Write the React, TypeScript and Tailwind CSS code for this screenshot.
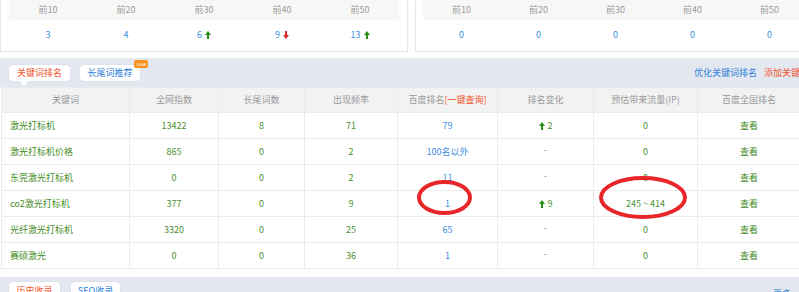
import React from "react";

const Up = () => (
  <svg width="6" height="8" viewBox="0 0 6 8" className="inline-block ml-[3px] align-[-1px]">
    <polygon points="0,4 3,0 6,4" fill="#2a8d17" />
    <rect x="2" y="4" width="2" height="4" fill="#2a8d17" />
  </svg>
);
const Down = () => (
  <svg width="6" height="8" viewBox="0 0 6 8" className="inline-block ml-[3px] align-[-1px]">
    <polygon points="0,4 3,8 6,4" fill="#d9262b" />
    <rect x="2" y="0" width="2" height="4" fill="#d9262b" />
  </svg>
);

const heads = ["前10", "前20", "前30", "前40", "前50"];

function Panel({ vals, px, w }: { vals: React.ReactNode[]; px: string; w: string }) {
  return (
    <div className={`${w} ${px} shrink-0 border border-t-0 border-[#e6e6e6] bg-white pb-[2px] shadow-[0_1px_1px_rgba(0,0,0,0.03)]`}>
      <div className="grid grid-cols-5 h-[20px] bg-[#f7f7f7] items-center text-[#9a9a9a]">
        {heads.map((h) => (
          <div key={h} className="text-center">{h}</div>
        ))}
      </div>
      <div className="grid grid-cols-5 h-[29px] items-center text-[#3c8fe0]">
        {vals.map((v, i) => (
          <div key={i} className="text-center">{v}</div>
        ))}
      </div>
    </div>
  );
}

type Row = { k: string; a: string; b: string; c: string; r: string; ch: string | null; up?: boolean; f: string };
const rows: Row[] = [
  { k: "激光打标机", a: "13422", b: "8", c: "71", r: "79", ch: "2", f: "0" },
  { k: "激光打标机价格", a: "865", b: "0", c: "2", r: "100名以外", ch: null, f: "0" },
  { k: "东莞激光打标机", a: "0", b: "0", c: "2", r: "11", ch: null, f: "0" },
  { k: "co2激光打标机", a: "377", b: "0", c: "9", r: "1", ch: "9", f: "245 ~ 414" },
  { k: "光纤激光打标机", a: "3320", b: "0", c: "25", r: "65", ch: null, f: "0" },
  { k: "赛硕激光", a: "0", b: "0", c: "36", r: "1", ch: null, f: "0" },
];

const widths = [128, 89, 86, 93, 100, 96, 104, 103];

export default function App() {
  const td = "border border-[#ebebeb] text-center";
  return (
    <div className="relative w-[799px] h-[292px] overflow-hidden bg-white text-[9px] leading-[12px] font-['Microsoft_YaHei','Noto_Sans_CJK_SC',sans-serif]">
      <div className="w-[824px]">
        {/* top panels */}
        <div className="flex gap-[7px]">
          <Panel
            w="w-[408px]"
            px="px-[8px]"
            vals={[
              "3",
              "4",
              <span>6<Up /></span>,
              <span>9<Down /></span>,
              <span>13<Up /></span>,
            ]}
          />
          <Panel w="w-[401px]" px="px-[7px]" vals={["0", "0", "0", "0", "0"]} />
        </div>

        {/* keyword band */}
        <div className="mt-[6px] h-[29px] bg-[#e3e7f0] flex items-center justify-between pl-[8px] pr-[15px]">
          <div className="flex gap-[8px] items-center">
            <div className="relative w-[63px] h-[18px] rounded-[5px] bg-white border border-[#dde1ea] flex items-center justify-center text-[#f2542d]">
              关键词排名
              <span className="absolute left-[11px] -bottom-[5px] w-0 h-0 border-l-[4px] border-r-[4px] border-t-[5px] border-l-transparent border-r-transparent border-t-white" />
            </div>
            <div className="relative w-[62px] h-[18px] rounded-[5px] bg-white border border-[#dde1ea] flex items-center justify-center text-[#2f7fd8]">
              长尾词推荐
              <span className="absolute -top-[5px] -right-[8px] h-[8px] px-[2px] rounded-[2px] bg-[#f7931e] text-white text-[5px] leading-[8px] italic">new</span>
            </div>
          </div>
          <div className="flex gap-[7px]">
            <span className="text-[#2f7fd8]">优化关键词排名</span>
            <span className="text-[#f2542d]">添加关键词</span>
          </div>
        </div>

        {/* table */}
        <table className="ml-[1px] table-fixed border-collapse" style={{ width: 799 }}>
          <colgroup>
            {widths.map((w, i) => (
              <col key={i} style={{ width: w }} />
            ))}
          </colgroup>
          <thead>
            <tr className="h-[25px] bg-[#f2f2f2] text-[#9a9a9a]">
              <th className={`${td} font-normal`}>关键词</th>
              <th className={`${td} font-normal`}>全网指数</th>
              <th className={`${td} font-normal`}>长尾词数</th>
              <th className={`${td} font-normal`}>出现频率</th>
              <th className={`${td} font-normal`}>
                百度排名<span className="text-[#f2542d]">[一键查询]</span>
              </th>
              <th className={`${td} font-normal`}>排名变化</th>
              <th className={`${td} font-normal`}>预估带来流量(IP)</th>
              <th className={`${td} font-normal`}>百度全国排名</th>
            </tr>
          </thead>
          <tbody className="text-[#4b9130]">
            {rows.map((r) => (
              <tr key={r.k} className="h-[26px]">
                <td className="border border-[#ebebeb] text-left pl-[8px] text-[#3f8a22]">{r.k}</td>
                <td className={td}>{r.a}</td>
                <td className={td}>{r.b}</td>
                <td className={td}>{r.c}</td>
                <td className={`${td} text-[#3c8fe0]`}>{r.r}</td>
                <td className={td}>
                  {r.ch ? (
                    <span>
                      <svg width="6" height="8" viewBox="0 0 6 8" className="inline-block mr-[3px] align-[-1px]">
                        <polygon points="0,4 3,0 6,4" fill="#2a8d17" />
                        <rect x="2" y="4" width="2" height="4" fill="#2a8d17" />
                      </svg>
                      {r.ch}
                    </span>
                  ) : (
                    <span className="text-[#888] relative -top-[2px]">-</span>
                  )}
                </td>
                <td className={td}>{r.f}</td>
                <td className={`${td} text-[#3f8a22]`}>查看</td>
              </tr>
            ))}
          </tbody>
        </table>

        {/* bottom band */}
        <div className="mt-[8px] h-[40px] bg-[#e3e7f0] flex items-start justify-between pl-[8px] pr-[15px] pt-[4px]">
          <div className="flex gap-[9px]">
            <div className="w-[53px] h-[20px] rounded-[5px] bg-white border border-[#dde1ea] flex items-center justify-center text-[#f2542d]">
              历史收录
            </div>
            <div className="w-[51px] h-[20px] rounded-[5px] bg-white border border-[#dde1ea] flex items-center justify-center text-[#2f7fd8]">
              SEO收录
            </div>
          </div>
          <span className="mt-[7px] mr-[8px] text-[#2f7fd8]">更多&gt;&gt;</span>
        </div>
      </div>

      {/* red annotations */}
      <svg className="absolute left-0 top-0 pointer-events-none" width="799" height="292">
        <ellipse cx="444.5" cy="197.5" rx="25.5" ry="15.5" fill="none" stroke="#e8262a" strokeWidth="4" />
        <ellipse cx="643" cy="197.5" rx="42" ry="19.5" fill="none" stroke="#e8262a" strokeWidth="4" />
      </svg>
    </div>
  );
}
